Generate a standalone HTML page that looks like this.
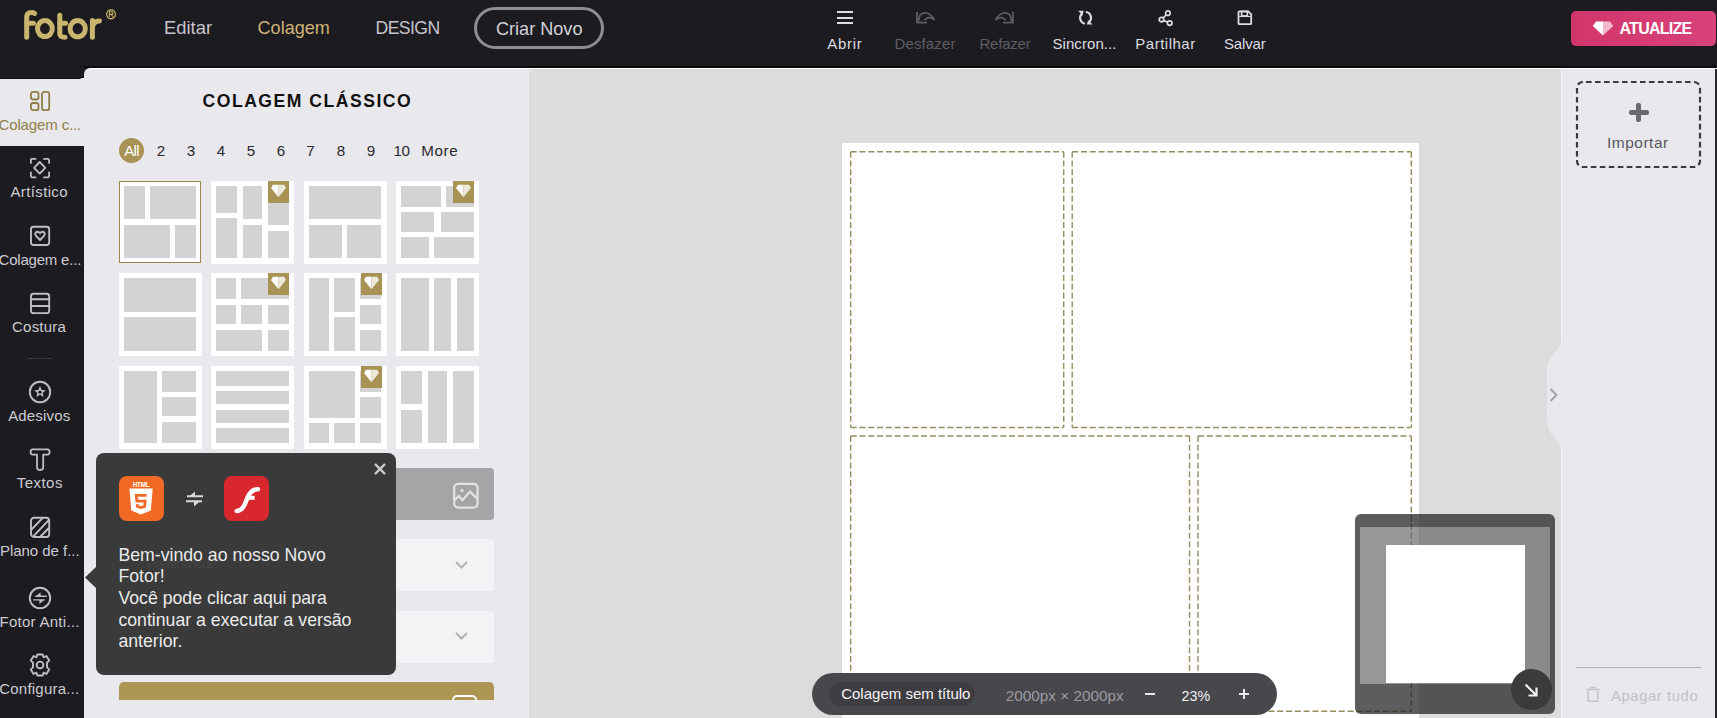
<!DOCTYPE html>
<html><head><meta charset="utf-8"><title>Fotor Colagem</title>
<style>
html,body{margin:0;padding:0;}
body{width:1717px;height:718px;overflow:hidden;position:relative;background:#1c1b20;font-family:"Liberation Sans",sans-serif;}
.r{position:absolute;}
.t{position:absolute;white-space:nowrap;line-height:1;}
</style></head><body>
<div class="r" style="left:0px;top:0px;width:1717px;height:68px;background:#1c1b20;"></div>
<div class="r" style="left:0px;top:66px;width:1717px;height:2px;background:#0b0b0d;"></div>
<svg class="r" style="left:0;top:0" width="130" height="60" viewBox="0 0 130 60"><g fill="none" stroke="#c9b56d" stroke-width="5" stroke-linecap="round">
<path d="M34.6 13.4 C 33 11.8, 31.5 12.6, 30 12.8 C 28 13.2, 26.7 14.5, 26.7 17 V37.3"/>
<path d="M27 23.3 H33.4"/>
<ellipse cx="44.9" cy="28.6" rx="7.4" ry="8"/>
<path d="M59.8 15.3 V33.6 C 59.8 36.6, 61.5 37.3, 65 37.3"/>
<path d="M60 23.3 H65.6"/>
<ellipse cx="77.7" cy="28.7" rx="7.6" ry="8.1"/>
<path d="M92.4 20.6 V37.3"/>
<path d="M92.6 26.5 C 93.5 22.6, 96 20.7, 99.5 20.9"/>
</g><circle cx="111" cy="14.35" r="4.4" fill="none" stroke="#c9b56d" stroke-width="1.3"/><path d="M109.4 17 V11.8 H111.6 C113.4 11.8 113.4 14.4 111.6 14.4 H109.6 M111.4 14.4 L113 17" fill="none" stroke="#c9b56d" stroke-width="1.1"/></svg>
<div class="t" style="left:164px;top:19.00px;font-size:18.4px;color:#c6c5cc;">Editar</div>
<div class="t" style="left:257.5px;top:19.00px;font-size:18.1px;color:#cfb377;">Colagem</div>
<div class="t" style="left:375.5px;top:20.00px;font-size:17.6px;color:#c6c5cc;letter-spacing:-0.55px;">DESIGN</div>
<div class="r" style="left:474px;top:7px;width:130px;height:42px;border:3px solid #8e8d92;border-radius:22px;box-sizing:border-box;"></div>
<div class="t" style="left:496px;top:20.20px;font-size:18.1px;color:#d2d2d8;">Criar Novo</div>
<div class="r" style="left:837px;top:11px;width:15.5px;height:2px;background:#dedde2;"></div>
<div class="r" style="left:837px;top:16.7px;width:15.5px;height:2px;background:#dedde2;"></div>
<div class="r" style="left:837px;top:22.3px;width:15.5px;height:2px;background:#dedde2;"></div>
<div class="t" style="left:694.8px;width:300px;text-align:center;top:36.00px;font-size:15px;color:#dedde2;letter-spacing:0.7px;">Abrir</div>
<svg class="r" style="left:914px;top:10px" width="22" height="16" viewBox="0 0 22 16"><path d="M3 2 V12.7 H13" fill="none" stroke="#5e5d63" stroke-width="1.8" stroke-linejoin="round"/><path d="M4.2 11.8 L5.8 5.5 C 9 1.6, 15.5 1.4, 20.3 9.6 C 16 6.3, 12.5 7.3, 10.5 10.3" fill="none" stroke="#5e5d63" stroke-width="1.7" stroke-linejoin="round"/></svg>
<div class="t" style="left:775px;width:300px;text-align:center;top:36.00px;font-size:15px;color:#5e5d63;letter-spacing:0.14px;">Desfazer</div>
<svg class="r" style="left:994px;top:10px" width="22" height="16" viewBox="0 0 22 16"><g transform="translate(22,0) scale(-1,1)"><path d="M3 2 V12.7 H13" fill="none" stroke="#5e5d63" stroke-width="1.8" stroke-linejoin="round"/><path d="M4.2 11.8 L5.8 5.5 C 9 1.6, 15.5 1.4, 20.3 9.6 C 16 6.3, 12.5 7.3, 10.5 10.3" fill="none" stroke="#5e5d63" stroke-width="1.7" stroke-linejoin="round"/></g></svg>
<div class="t" style="left:855px;width:300px;text-align:center;top:36.00px;font-size:15px;color:#5e5d63;letter-spacing:-0.2px;">Refazer</div>
<svg class="r" style="left:1076px;top:9px" width="18" height="18" viewBox="0 0 18 18"><path d="M6.1 4.6 A5.9 5.9 0 0 0 8.9 14.8" fill="none" stroke="#dedde2" stroke-width="2.1"/><path d="M9.8 3 A5.9 5.9 0 0 1 12.6 13.6" fill="none" stroke="#dedde2" stroke-width="2.1"/><path d="M2.3 1.7 L7.7 1.7 L6.5 6.6 Z" fill="#dedde2"/><path d="M10.9 15.6 L16.6 15.6 L12.1 11.2 Z" fill="#dedde2"/></svg>
<div class="t" style="left:934.5px;width:300px;text-align:center;top:36.00px;font-size:15px;color:#dedde2;letter-spacing:0.07px;">Sincron...</div>
<svg class="r" style="left:1157px;top:9px" width="17" height="18" viewBox="0 0 17 18"><circle cx="10.9" cy="4.2" r="2.3" fill="none" stroke="#dedde2" stroke-width="1.7"/><circle cx="4.5" cy="10.6" r="2.3" fill="none" stroke="#dedde2" stroke-width="1.7"/><circle cx="12.7" cy="14.1" r="2.3" fill="none" stroke="#dedde2" stroke-width="1.7"/><path d="M6.2 8.9 L9.2 5.9 M6.6 11.5 L10.6 13.2" stroke="#dedde2" stroke-width="1.5"/></svg>
<div class="t" style="left:1015.5px;width:300px;text-align:center;top:36.00px;font-size:15px;color:#dedde2;letter-spacing:0.5px;">Partilhar</div>
<svg class="r" style="left:1236px;top:9px" width="18" height="18" viewBox="0 0 18 18"><path d="M3.5 2.3 H12.3 L15.2 5.3 V14.2 Q15.2 15.2 14.2 15.2 H3.5 Q2.5 15.2 2.5 14.2 V3.3 Q2.5 2.3 3.5 2.3 Z" fill="none" stroke="#dedde2" stroke-width="1.8" stroke-linejoin="round"/><rect x="5.6" y="2.5" width="5.8" height="4.4" fill="none" stroke="#dedde2" stroke-width="1.6"/><path d="M3.2 7.5 H14.5" stroke="#dedde2" stroke-width="1.1"/></svg>
<div class="t" style="left:1094.8px;width:300px;text-align:center;top:36.00px;font-size:15px;color:#dedde2;letter-spacing:-0.15px;">Salvar</div>
<div class="r" style="left:1571px;top:11px;width:145px;height:35px;background:linear-gradient(90deg,#d1366b,#d8427a);border-radius:5px;"></div>
<svg class="r" style="left:1592px;top:21px" width="22" height="15" viewBox="0 0 22 15"><path d="M4 0.5 H11 V14.5 L0.8 5 Z" fill="#fff"/><path d="M11 0.5 H18 L21.2 5 L11 14.5 Z" fill="#f2b8cc"/></svg>
<div class="t" style="left:1619.5px;top:21.00px;font-size:16px;color:#fff;font-weight:bold;letter-spacing:-0.75px;">ATUALIZE</div>
<div class="r" style="left:84px;top:68px;width:445px;height:650px;background:#e9e8ed;border-top-left-radius:6px;"></div>
<div class="t" style="left:202.5px;top:93.00px;font-size:17.6px;color:#111;font-weight:bold;letter-spacing:1.5px;">COLAGEM CLÁSSICO</div>
<div class="r" style="left:119px;top:137.5px;width:25px;height:25px;border-radius:50%;background:#a99354;"></div>
<div class="t" style="left:-18.400000000000006px;width:300px;text-align:center;top:142.80px;font-size:15px;color:#fff;letter-spacing:-0.6px;">All</div>
<div class="t" style="left:11px;width:300px;text-align:center;top:142.80px;font-size:15.2px;color:#2a2a2e;">2</div>
<div class="t" style="left:41px;width:300px;text-align:center;top:142.80px;font-size:15.2px;color:#2a2a2e;">3</div>
<div class="t" style="left:71px;width:300px;text-align:center;top:142.80px;font-size:15.2px;color:#2a2a2e;">4</div>
<div class="t" style="left:101px;width:300px;text-align:center;top:142.80px;font-size:15.2px;color:#2a2a2e;">5</div>
<div class="t" style="left:131px;width:300px;text-align:center;top:142.80px;font-size:15.2px;color:#2a2a2e;">6</div>
<div class="t" style="left:160.5px;width:300px;text-align:center;top:142.80px;font-size:15.2px;color:#2a2a2e;">7</div>
<div class="t" style="left:191px;width:300px;text-align:center;top:142.80px;font-size:15.2px;color:#2a2a2e;">8</div>
<div class="t" style="left:221px;width:300px;text-align:center;top:142.80px;font-size:15.2px;color:#2a2a2e;">9</div>
<div class="t" style="left:251.5px;width:300px;text-align:center;top:142.80px;font-size:15.2px;color:#2a2a2e;letter-spacing:-0.4px;">10</div>
<div class="t" style="left:421.3px;top:142.80px;font-size:15.2px;color:#2a2a2e;letter-spacing:0.6px;">More</div>
<div class="r" style="left:119px;top:181px;width:82px;height:82px;background:#fff;box-shadow:inset 0 0 0 1px #9c8748;"><div class="r" style="left:5px;top:5px;width:21.0px;height:33.0px;background:#d3d3d5;"></div><div class="r" style="left:31px;top:5px;width:46.0px;height:33.0px;background:#d3d3d5;"></div><div class="r" style="left:5px;top:43.7px;width:46.0px;height:33.3px;background:#d3d3d5;"></div><div class="r" style="left:56px;top:43.7px;width:21.0px;height:33.3px;background:#d3d3d5;"></div></div>
<div class="r" style="left:211px;top:181px;width:83px;height:83px;background:#fff;"><div class="r" style="left:5px;top:5px;width:21.0px;height:27.0px;background:#d3d3d5;"></div><div class="r" style="left:5px;top:37px;width:21.0px;height:40.0px;background:#d3d3d5;"></div><div class="r" style="left:31.5px;top:5px;width:19.5px;height:33.0px;background:#d3d3d5;"></div><div class="r" style="left:31.5px;top:44px;width:19.5px;height:33.0px;background:#d3d3d5;"></div><div class="r" style="left:56.7px;top:5px;width:21.3px;height:39.0px;background:#d3d3d5;"></div><div class="r" style="left:56.7px;top:50px;width:21.3px;height:27.0px;background:#d3d3d5;"></div><div class="r" style="left:57px;top:0;width:21px;height:22px;background:#a89254;"><svg width="21" height="22" viewBox="0 0 21 22" style="position:absolute;left:0;top:0"><path d="M5 3.7 H10.5 V16.3 L3 7 Z" fill="#fff"/><path d="M10.5 3.7 H16.2 L18 7 L10.5 16.3 Z" fill="#ece8da"/></svg></div></div>
<div class="r" style="left:304px;top:181px;width:83px;height:83px;background:#fff;"><div class="r" style="left:5px;top:5px;width:72.0px;height:33.0px;background:#d3d3d5;"></div><div class="r" style="left:5px;top:43.5px;width:33.0px;height:33.5px;background:#d3d3d5;"></div><div class="r" style="left:43px;top:43.5px;width:34.0px;height:33.5px;background:#d3d3d5;"></div></div>
<div class="r" style="left:396px;top:181px;width:83px;height:83px;background:#fff;"><div class="r" style="left:5px;top:5px;width:40.0px;height:20.7px;background:#d3d3d5;"></div><div class="r" style="left:50.4px;top:5px;width:27.6px;height:20.7px;background:#d3d3d5;"></div><div class="r" style="left:5px;top:31.3px;width:33.4px;height:19.4px;background:#d3d3d5;"></div><div class="r" style="left:44.5px;top:31.3px;width:33.5px;height:19.4px;background:#d3d3d5;"></div><div class="r" style="left:5px;top:56.2px;width:27.7px;height:20.8px;background:#d3d3d5;"></div><div class="r" style="left:38px;top:56.2px;width:40.0px;height:20.8px;background:#d3d3d5;"></div><div class="r" style="left:57px;top:0;width:21px;height:22px;background:#a89254;"><svg width="21" height="22" viewBox="0 0 21 22" style="position:absolute;left:0;top:0"><path d="M5 3.7 H10.5 V16.3 L3 7 Z" fill="#fff"/><path d="M10.5 3.7 H16.2 L18 7 L10.5 16.3 Z" fill="#ece8da"/></svg></div></div>
<div class="r" style="left:119px;top:273px;width:83px;height:83px;background:#fff;"><div class="r" style="left:5px;top:5px;width:72.0px;height:33.6px;background:#d3d3d5;"></div><div class="r" style="left:5px;top:44px;width:72.0px;height:33.6px;background:#d3d3d5;"></div></div>
<div class="r" style="left:211px;top:273px;width:83px;height:83px;background:#fff;"><div class="r" style="left:5px;top:5px;width:20.0px;height:20.7px;background:#d3d3d5;"></div><div class="r" style="left:30px;top:5px;width:47.6px;height:20.7px;background:#d3d3d5;"></div><div class="r" style="left:5px;top:32px;width:20.0px;height:19.0px;background:#d3d3d5;"></div><div class="r" style="left:30px;top:32px;width:21.3px;height:19.0px;background:#d3d3d5;"></div><div class="r" style="left:56.5px;top:32px;width:21.1px;height:19.0px;background:#d3d3d5;"></div><div class="r" style="left:5px;top:57px;width:46.3px;height:20.6px;background:#d3d3d5;"></div><div class="r" style="left:56.5px;top:57px;width:21.1px;height:20.6px;background:#d3d3d5;"></div><div class="r" style="left:57px;top:0;width:21px;height:22px;background:#a89254;"><svg width="21" height="22" viewBox="0 0 21 22" style="position:absolute;left:0;top:0"><path d="M5 3.7 H10.5 V16.3 L3 7 Z" fill="#fff"/><path d="M10.5 3.7 H16.2 L18 7 L10.5 16.3 Z" fill="#ece8da"/></svg></div></div>
<div class="r" style="left:304px;top:273px;width:83px;height:83px;background:#fff;"><div class="r" style="left:5px;top:5px;width:19.7px;height:72.6px;background:#d3d3d5;"></div><div class="r" style="left:30px;top:5px;width:20.8px;height:33.6px;background:#d3d3d5;"></div><div class="r" style="left:30px;top:44px;width:20.8px;height:33.6px;background:#d3d3d5;"></div><div class="r" style="left:56px;top:5px;width:21.0px;height:20.7px;background:#d3d3d5;"></div><div class="r" style="left:56px;top:31.5px;width:21.0px;height:19.5px;background:#d3d3d5;"></div><div class="r" style="left:56px;top:57px;width:21.0px;height:20.6px;background:#d3d3d5;"></div><div class="r" style="left:57px;top:0;width:21px;height:22px;background:#a89254;"><svg width="21" height="22" viewBox="0 0 21 22" style="position:absolute;left:0;top:0"><path d="M5 3.7 H10.5 V16.3 L3 7 Z" fill="#fff"/><path d="M10.5 3.7 H16.2 L18 7 L10.5 16.3 Z" fill="#ece8da"/></svg></div></div>
<div class="r" style="left:396px;top:273px;width:83px;height:83px;background:#fff;"><div class="r" style="left:5px;top:5px;width:27.7px;height:72.6px;background:#d3d3d5;"></div><div class="r" style="left:38px;top:5px;width:16.7px;height:72.6px;background:#d3d3d5;"></div><div class="r" style="left:60.6px;top:5px;width:17.2px;height:72.6px;background:#d3d3d5;"></div></div>
<div class="r" style="left:119px;top:366px;width:83px;height:83px;background:#fff;"><div class="r" style="left:5px;top:5px;width:33.0px;height:71.6px;background:#d3d3d5;"></div><div class="r" style="left:43.4px;top:5px;width:33.6px;height:20.8px;background:#d3d3d5;"></div><div class="r" style="left:43.4px;top:31.2px;width:33.6px;height:19.2px;background:#d3d3d5;"></div><div class="r" style="left:43.4px;top:56.1px;width:33.6px;height:20.5px;background:#d3d3d5;"></div></div>
<div class="r" style="left:211px;top:366px;width:83px;height:83px;background:#fff;"><div class="r" style="left:5px;top:5px;width:73.0px;height:14.6px;background:#d3d3d5;"></div><div class="r" style="left:5px;top:25px;width:73.0px;height:13.2px;background:#d3d3d5;"></div><div class="r" style="left:5px;top:44px;width:73.0px;height:12.8px;background:#d3d3d5;"></div><div class="r" style="left:5px;top:62px;width:73.0px;height:14.6px;background:#d3d3d5;"></div></div>
<div class="r" style="left:304px;top:366px;width:83px;height:83px;background:#fff;"><div class="r" style="left:5px;top:5px;width:46.0px;height:46.7px;background:#d3d3d5;"></div><div class="r" style="left:56px;top:5px;width:21.0px;height:20.8px;background:#d3d3d5;"></div><div class="r" style="left:56px;top:31.2px;width:21.0px;height:20.5px;background:#d3d3d5;"></div><div class="r" style="left:5px;top:57px;width:19.7px;height:19.6px;background:#d3d3d5;"></div><div class="r" style="left:30px;top:57px;width:20.8px;height:19.6px;background:#d3d3d5;"></div><div class="r" style="left:56px;top:57px;width:21.0px;height:19.6px;background:#d3d3d5;"></div><div class="r" style="left:57px;top:0;width:21px;height:22px;background:#a89254;"><svg width="21" height="22" viewBox="0 0 21 22" style="position:absolute;left:0;top:0"><path d="M5 3.7 H10.5 V16.3 L3 7 Z" fill="#fff"/><path d="M10.5 3.7 H16.2 L18 7 L10.5 16.3 Z" fill="#ece8da"/></svg></div></div>
<div class="r" style="left:396px;top:366px;width:83px;height:83px;background:#fff;"><div class="r" style="left:5px;top:5px;width:21.0px;height:33.2px;background:#d3d3d5;"></div><div class="r" style="left:5px;top:44px;width:21.0px;height:32.6px;background:#d3d3d5;"></div><div class="r" style="left:31.7px;top:5px;width:19.6px;height:71.6px;background:#d3d3d5;"></div><div class="r" style="left:57px;top:5px;width:20.8px;height:71.6px;background:#d3d3d5;"></div></div>
<div class="r" style="left:119px;top:468px;width:375px;height:52px;background:#a5a5a7;border-radius:4px;"></div>
<svg class="r" style="left:452px;top:482px" width="27" height="27" viewBox="0 0 27 27"><rect x="2.2" y="1.9" width="23.4" height="23.7" rx="4" fill="none" stroke="#e2e2e4" stroke-width="2.2"/><circle cx="10" cy="8.6" r="1.6" fill="#e2e2e4"/><path d="M2.5 18.5 L6.8 13.8 L10.3 18.3 L18 9.6 L25.5 17" fill="none" stroke="#e2e2e4" stroke-width="2.2" stroke-linejoin="round"/></svg>
<div class="r" style="left:119px;top:539px;width:375px;height:52px;background:#f3f3f6;border-radius:3px;"></div>
<div class="r" style="left:119px;top:611px;width:375px;height:52px;background:#f3f3f6;border-radius:3px;"></div>
<svg class="r" style="left:454px;top:560px" width="15" height="10" viewBox="0 0 15 10"><path d="M2 2 L7.5 7.5 L13 2" fill="none" stroke="#b3b3b6" stroke-width="2.2"/></svg>
<svg class="r" style="left:454px;top:631px" width="15" height="10" viewBox="0 0 15 10"><path d="M2 2 L7.5 7.5 L13 2" fill="none" stroke="#b3b3b6" stroke-width="2.2"/></svg>
<div class="r" style="left:119px;top:682px;width:375px;height:18px;background:#ad9654;border-radius:5px 5px 0 0;overflow:hidden;"><div class="r" style="left:333px;top:13px;width:25px;height:14px;border:2.2px solid #fff;border-radius:5px;box-sizing:border-box;"></div></div>
<div class="r" style="left:0px;top:78px;width:90px;height:68px;background:#e9e8ed;"></div>
<div class="r" style="left:0;top:60px;width:84px;height:18px;background:#1c1b20;border-bottom-right-radius:5px;box-shadow:0 1px 0 #0b0b0d;"></div>
<div class="r" style="left:0;top:146px;width:84px;height:572px;background:#1c1b20;border-top-right-radius:4px;"></div>
<svg class="r" style="left:29px;top:90px" width="22" height="22" viewBox="0 0 22 22"><g fill="none" stroke="#8f7f47" stroke-width="1.8"><rect x="1.9" y="1.9" width="7.6" height="7.6" rx="2.3"/><rect x="1.9" y="13" width="7.6" height="7.2" rx="2.3"/><rect x="13" y="1.9" width="7.2" height="18.3" rx="2.3"/></g></svg>
<div class="t" style="left:-1.5px;top:116.70px;font-size:15px;color:#8f8048;letter-spacing:-0.13px;">Colagem c...</div>
<svg class="r" style="left:29px;top:157px" width="22" height="22" viewBox="0 0 22 22"><g fill="none" stroke="#bfbec3" stroke-width="1.8" stroke-linecap="round"><path d="M1.9 6 V2.6 Q1.9 1.9 2.6 1.9 H6.5"/><path d="M15 1.9 H18.4 Q20.1 1.9 20.1 3.6 V6"/><path d="M1.9 15.5 V19 Q1.9 20.4 3.3 20.4 H6.5"/><path d="M15 20.4 H18.7 Q20.1 20.4 20.1 19 V15.5"/><path d="M10.7 5 L16.3 10.8 L10.7 16.6 L5.1 10.8 Z" stroke-linejoin="round"/></g></svg>
<div class="t" style="left:10.5px;top:184.00px;font-size:15px;color:#cdccd2;letter-spacing:0.36px;">Artístico</div>
<svg class="r" style="left:29px;top:225px" width="22" height="22" viewBox="0 0 22 22"><g fill="none" stroke="#bfbec3" stroke-width="1.9"><rect x="2" y="1.8" width="18.2" height="18.2" rx="2.5"/><path d="M11 15 L7 10.8 C5.5 9.2 6.4 6.8 8.5 6.8 C9.6 6.8 10.4 7.5 11 8.2 C11.6 7.5 12.4 6.8 13.5 6.8 C15.6 6.8 16.5 9.2 15 10.8 Z" stroke-linejoin="round"/></g></svg>
<div class="t" style="left:-1.5px;top:252.00px;font-size:15px;color:#cdccd2;letter-spacing:-0.2px;">Colagem e...</div>
<svg class="r" style="left:29px;top:292px" width="22" height="22" viewBox="0 0 22 22"><g fill="none" stroke="#bfbec3" stroke-width="1.9"><rect x="2" y="1.8" width="18.2" height="19.4" rx="2.5"/><path d="M2 7.3 H20.2 M2 14 H20.2"/></g></svg>
<div class="t" style="left:12px;top:318.50px;font-size:15px;color:#cdccd2;letter-spacing:0.23px;">Costura</div>
<div class="r" style="left:27px;top:358px;width:25px;height:1px;background:#3b3a40;"></div>
<svg class="r" style="left:28px;top:380px" width="24" height="24" viewBox="0 0 24 24"><g fill="none" stroke="#bfbec3" stroke-width="1.9"><circle cx="12" cy="12" r="10.2"/></g><path d="M12 6 L13.7 9.9 L17.8 10.2 L14.7 12.9 L15.6 17 L12 14.8 L8.4 17 L9.3 12.9 L6.2 10.2 L10.3 9.9 Z" fill="#bfbec3"/><circle cx="12" cy="12.2" r="1.6" fill="#1c1b20"/></svg>
<div class="t" style="left:8.2px;top:407.70px;font-size:15px;color:#cdccd2;letter-spacing:0.16px;">Adesivos</div>
<svg class="r" style="left:29px;top:447px" width="22" height="25" viewBox="0 0 22 25"><path d="M3 2.4 H18.4 Q20.6 2.4 20.6 5 Q20.6 7.6 18.4 7.6 H14.2 V20.4 Q14.2 22.9 11 22.9 Q8 22.9 8 20.4 V7.6 H3.6 Q1.6 7.6 1.6 5 Q1.6 2.4 3.6 2.4 Z" fill="none" stroke="#bfbec3" stroke-width="1.8" stroke-linejoin="round"/></svg>
<div class="t" style="left:16.7px;top:474.70px;font-size:15px;color:#cdccd2;letter-spacing:0.48px;">Textos</div>
<svg class="r" style="left:29px;top:516px" width="22" height="22" viewBox="0 0 22 22"><g fill="none" stroke="#bfbec3" stroke-width="1.9"><rect x="2" y="1.8" width="18.2" height="19.2" rx="3"/><path d="M2.5 13.5 L13.5 2.2 M4.5 20.2 L19.8 4.2 M11.5 20.5 L19.8 12"/></g></svg>
<div class="t" style="left:0px;top:542.80px;font-size:15px;color:#cdccd2;letter-spacing:-0.04px;">Plano de f...</div>
<svg class="r" style="left:28px;top:586px" width="24" height="24" viewBox="0 0 24 24"><g fill="none" stroke="#bfbec3" stroke-width="1.9"><circle cx="12" cy="12" r="10.2"/></g><path d="M7.2 9.6 H18.8 V11 H7.2 Z M8 10 L12.6 6.3 V10 Z M5.2 13.2 H16.8 V14.6 H5.2 Z M16 14.2 L11.4 17.9 V14.2 Z" fill="#bfbec3"/></svg>
<div class="t" style="left:-0.5px;top:613.60px;font-size:15px;color:#cdccd2;letter-spacing:0.27px;">Fotor Anti...</div>
<svg class="r" style="left:28px;top:653px" width="24" height="24" viewBox="0 0 24 24"><path d="M9.3 1.5 H14.7 L15.6 4.3 L18.4 3 L21.2 7.6 L19 9.6 L19 14.4 L21.2 16.4 L18.4 21 L15.6 19.7 L14.7 22.5 H9.3 L8.4 19.7 L5.6 21 L2.8 16.4 L5 14.4 L5 9.6 L2.8 7.6 L5.6 3 L8.4 4.3 Z" fill="none" stroke="#bfbec3" stroke-width="1.9" stroke-linejoin="round"/><circle cx="12" cy="12" r="3.4" fill="none" stroke="#bfbec3" stroke-width="1.9"/></svg>
<div class="t" style="left:-0.8px;top:680.90px;font-size:15px;color:#cdccd2;letter-spacing:0.22px;">Configura...</div>
<div class="r" style="left:529px;top:68px;width:1032px;height:650px;background:#dcdcdc;"></div>
<div class="r" style="left:842px;top:143px;width:577px;height:577px;background:#fff;"></div>
<svg class="r" style="left:842px;top:143px" width="577" height="577" viewBox="842 143 577 577"><g fill="none" stroke="#978c5e" stroke-width="1.4" stroke-dasharray="6 2.8"><path d="M850.7 151.7 H1063.7 M1063.7 151.7 V427.5 M850.7 151.7 V427.5 M850.7 427.5 H1063.7"/><path d="M1072.2 151.7 H1411.3 M1411.3 151.7 V427.5 M1072.2 151.7 V427.5 M1072.2 427.5 H1411.3"/><path d="M850.7 436 H1189.5 M1189.5 436 V711.3 M850.7 436 V711.3 M850.7 711.3 H1189.5"/><path d="M1198 436 H1411.3 M1411.3 436 V711.3 M1198 436 V711.3 M1198 711.3 H1411.3"/></g></svg>
<div class="r" style="left:812px;top:673px;width:465px;height:41.5px;background:#48474c;border-radius:21px;"></div>
<div class="r" style="left:829px;top:682px;width:146px;height:24px;background:#3e3d42;border-radius:12px;"></div>
<div class="t" style="left:841.2px;top:685.90px;font-size:15px;color:#f4f4f6;">Colagem sem título</div>
<div class="t" style="left:1005.8px;top:687.50px;font-size:15.3px;color:#9c9ba0;">2000px × 2000px</div>
<div class="r" style="left:1145px;top:693px;width:9.5px;height:2px;background:#e8e8ea;"></div>
<div class="t" style="left:1181.6px;top:688.50px;font-size:14.3px;color:#f0f0f2;">23%</div>
<div class="r" style="left:1239px;top:693px;width:10px;height:2px;background:#e8e8ea;"></div>
<div class="r" style="left:1243px;top:688.5px;width:2px;height:10px;background:#e8e8ea;"></div>
<div class="r" style="left:1355px;top:514px;width:200px;height:199.5px;box-sizing:border-box;border-style:solid;border-color:rgba(37,37,37,0.74);border-width:13.5px 5.5px 30.5px 5.5px;background:rgba(90,90,90,0.63);background-clip:padding-box;border-radius:6px;"></div>
<div class="r" style="left:1386px;top:545px;width:138.5px;height:138px;background:#fff;"></div>
<div class="r" style="left:1510.5px;top:669px;width:41px;height:41px;background:#3b3b3d;border-radius:50%;"></div>
<svg class="r" style="left:1522px;top:681px" width="18" height="18" viewBox="0 0 18 18"><path d="M3.5 3.5 L13.5 13.5 M14.5 6.5 V14.5 H6.5" fill="none" stroke="#f2f2f2" stroke-width="2.2"/></svg>
<div class="r" style="left:1561px;top:68px;width:154px;height:650px;background:#e9e8ed;"></div>
<div class="r" style="left:1715px;top:68px;width:2px;height:650px;background:#2a2a2e;"></div>
<div class="r" style="left:1561px;top:68px;width:1px;height:650px;background:#f6f6f8;"></div>
<div class="r" style="left:529px;top:68px;width:1188px;height:1px;background:#ffffff;"></div>
<div class="r" style="left:89px;top:68px;width:440px;height:1px;background:#ffffff;"></div>
<svg class="r" style="left:1544px;top:340px" width="20" height="110" viewBox="0 0 20 110"><path d="M17.5 0 L17.5 3 C 10 14, 3 18, 3 30 V80 C 3 92, 10 96, 17.5 107 L17.5 110 H20 V0 Z" fill="#e9e8ed"/><path d="M6.5 49 L12.5 55 L6.5 61" fill="none" stroke="#a3a3a6" stroke-width="2"/></svg>
<svg class="r" style="left:1575px;top:80px" width="127" height="89" viewBox="0 0 127 89"><rect x="2" y="2" width="123" height="85" rx="6" fill="none" stroke="#3b3b3e" stroke-width="2.2" stroke-dasharray="5.6 3.4" stroke-dashoffset="-3"/></svg>
<div class="r" style="left:1628.5px;top:109.5px;width:20px;height:5px;background:#6b6b6e;border-radius:2px;"></div>
<div class="r" style="left:1636px;top:102.5px;width:5px;height:19.5px;background:#6b6b6e;border-radius:2px;"></div>
<div class="t" style="left:1607px;top:135.00px;font-size:15.5px;color:#58585c;letter-spacing:0.5px;">Importar</div>
<div class="r" style="left:1576px;top:667px;width:125px;height:1px;background:#b3b2b7;"></div>
<svg class="r" style="left:1585px;top:686px" width="16" height="17" viewBox="0 0 16 17"><path d="M1.5 3.5 H14.5 M5.5 1.5 H10.5" fill="none" stroke="#c4c3c8" stroke-width="1.5"/><path d="M3.2 4.5 V15.3 H12.8 V4.5" fill="none" stroke="#c4c3c8" stroke-width="1.6"/></svg>
<div class="t" style="left:1611px;top:688.50px;font-size:14.8px;color:#c2c1c6;letter-spacing:0.6px;">Apagar tudo</div>
<div class="r" style="left:96px;top:453px;width:300px;height:221.5px;background:#3a3a3a;border-radius:8px;"></div>
<svg class="r" style="left:84px;top:566px" width="13" height="23" viewBox="0 0 13 23"><path d="M13 0 L1 11.5 L13 23 Z" fill="#3a3a3a"/></svg>
<svg class="r" style="left:373px;top:462px" width="14" height="14" viewBox="0 0 14 14"><path d="M2 2 L12 12 M12 2 L2 12" stroke="#cfcfcf" stroke-width="2.4"/></svg>
<div class="r" style="left:119px;top:475.5px;width:45px;height:45px;background:#f06a26;border-radius:8px;"></div>
<svg class="r" style="left:119px;top:475.5px" width="45" height="45" viewBox="0 0 45 45"><path d="M10.4 12.6 H33.7 L31.8 34.6 L22 38.4 L12.3 34.6 Z" fill="#fff"/><path d="M27.6 19.4 H17.2 L17.8 25.2 H26.2 L25.6 30.4 L22 31.6 L18.4 30.4 L18.2 28.2" fill="none" stroke="#f06a26" stroke-width="2.7"/><text x="22" y="10.9" font-family="Liberation Sans" font-weight="bold" font-size="6.3" fill="#fff" text-anchor="middle" letter-spacing="-0.2">HTML</text></svg>
<svg class="r" style="left:184px;top:490px" width="21" height="18" viewBox="0 0 21 18"><path d="M3 6.3 H19 M2 11.2 H18" stroke="#d8d8d8" stroke-width="2"/><path d="M11 1.5 L11 7 L4.5 7 Z M10 16.5 L10 11 L16.5 11 Z" fill="#d8d8d8"/></svg>
<div class="r" style="left:224px;top:475.5px;width:45px;height:45px;background:#d8282e;border-radius:8px;"></div>
<svg class="r" style="left:224px;top:475.5px" width="45" height="45" viewBox="0 0 45 45"><path d="M12.8 35 C 18.5 34.5, 20.5 29.5, 23 23 C 25 17.5, 27.5 13.2, 33.8 13.2" fill="none" stroke="#fff" stroke-width="4.6" stroke-linecap="round"/><path d="M22.8 21.8 H30.6" stroke="#fff" stroke-width="4"/></svg>
<div class="t" style="left:118.4px;top:546.60px;font-size:17.7px;color:#ebebeb;">Bem-vindo ao nosso Novo</div>
<div class="t" style="left:118.4px;top:568.20px;font-size:17.7px;color:#ebebeb;">Fotor!</div>
<div class="t" style="left:118.4px;top:589.80px;font-size:17.7px;color:#ebebeb;">Você pode clicar aqui para</div>
<div class="t" style="left:118.4px;top:611.50px;font-size:17.7px;color:#ebebeb;">continuar a executar a versão</div>
<div class="t" style="left:118.4px;top:633.10px;font-size:17.7px;color:#ebebeb;">anterior.</div>
<div class="t" style="left:146px;top:557.00px;font-size:13px;color:rgba(150,150,150,0.12);">Preferência</div>
</body></html>
